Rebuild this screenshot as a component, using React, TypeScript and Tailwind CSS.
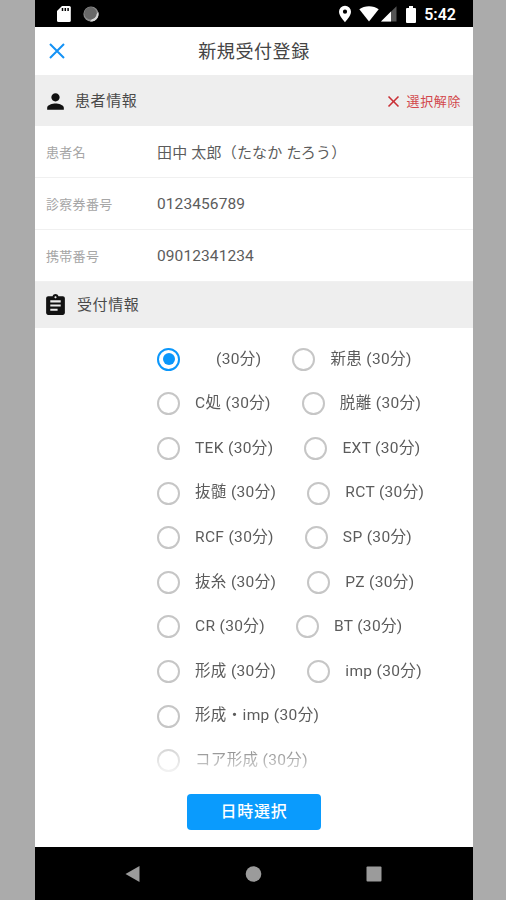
import React, { useState } from 'react';
import { clsx } from 'clsx';
import { MdPerson, MdAssignment, MdClose } from 'react-icons/md';

type Option = { id: string; label: string };

const patient = [
  { label: '患者名', value: '田中 太郎（たなか たろう）', className: 'text-[15px] tracking-[0.2px] pt-px' },
  { label: '診察券番号', value: '0123456789', className: 'text-[15.500px] tracking-[0.100px]' },
  { label: '携帯番号', value: '09012341234', className: 'text-[15.500px] tracking-[0.100px]' }
];

const optionRows: Option[][] = [
  [{ id: 'none', label: '' }, { id: 'new', label: '新患' }],
  [{ id: 'c', label: 'C処' }, { id: 'datsuri', label: '脱離' }],
  [{ id: 'tek', label: 'TEK' }, { id: 'ext', label: 'EXT' }],
  [{ id: 'batsuzui', label: '抜髄' }, { id: 'rct', label: 'RCT' }],
  [{ id: 'rcf', label: 'RCF' }, { id: 'sp', label: 'SP' }],
  [{ id: 'basshi', label: '抜糸' }, { id: 'pz', label: 'PZ' }],
  [{ id: 'cr', label: 'CR' }, { id: 'bt', label: 'BT' }],
  [{ id: 'keisei', label: '形成' }, { id: 'imp', label: 'imp' }],
  [{ id: 'keisei-imp', label: '形成・imp' }],
  [{ id: 'core', label: 'コア形成' }]
];

const StatusBar = () => (
  <div className="h-[27px] shrink-0 bg-black flex items-center pl-[21px] pr-[17px] text-white">
    <svg width="16" height="18" viewBox="0 0 16 18" className="mt-px">
      <path d="M6 1h7.300a1.500 1.500 0 0 1 1.500 1.500v13a1.500 1.500 0 0 1-1.500 1.500H2.500A1.500 1.500 0 0 1 1 15.500V6z" fill="#fff" />
      <path d="M6.500 3v3M9.300 3v3M12.100 3v3" stroke="#000" strokeWidth="1.500" />
    </svg>
    <svg width="18" height="18" viewBox="0 0 18 18" className="ml-[10px] mt-px">
      <circle cx="9" cy="9" r="7.600" fill="#8c8c8c" />
      <path d="M16.300 7A7.600 7.600 0 0 1 8 16.500L10 14z" fill="#d8d8d8" />
      <circle cx="8.500" cy="8.300" r="6.200" fill="#686868" />
    </svg>
    <div className="flex-1" />
    <svg width="14" height="18" viewBox="0 0 14 18" className="mt-px">
      <path d="M7 .8a6 6 0 0 0-6 6C1 11 7 17.200 7 17.200S13 11 13 6.800a6 6 0 0 0-6-6zm0 8a2.100 2.100 0 1 1 0-4.200 2.100 2.100 0 0 1 0 4.200z" fill="#fff" />
    </svg>
    <svg width="20" height="16" viewBox="0 0 20 16" className="ml-[7px] mt-px">
      <path d="M10 15.500.3 3.200C3 1.200 6.300.2 10 .2s7 1 9.700 3z" fill="#fff" />
    </svg>
    <svg width="16" height="16" viewBox="0 0 16 16" className="ml-[2px] mt-px">
      <path d="M0 15.500 15.500.2v15.300z" fill="#555" />
      <path d="M0 15.500 10 5.600v9.900z" fill="#fff" />
    </svg>
    <svg width="10" height="17" viewBox="0 0 10 17" className="ml-[9px] mt-px">
      <path d="M3 0h4v2h2a1 1 0 0 1 1 1v13a1 1 0 0 1-1 1H1a1 1 0 0 1-1-1V3a1 1 0 0 1 1-1h2z" fill="#fff" />
    </svg>
    <span className="ml-[8px] mt-[2px] text-[16px] leading-none font-semibold">5:42</span>
  </div>
);

const Radio = ({ option, checked, onSelect }: { option: Option; checked: boolean; onSelect: () => void }) => (
  <button type="button" role="radio" aria-checked={checked} onClick={onSelect} className="flex items-center gap-[15px]">
    <span
      className={clsx(
        'size-[23px] rounded-full border-2 flex items-center justify-center',
        checked ? 'border-[#0b97fb]' : 'border-[#c6c6c6]'
      )}
    >
      {checked && <span className="size-[12px] rounded-full bg-[#0b97fb]" />}
    </span>
    <span className={clsx('whitespace-nowrap', !option.label && 'pl-[21px]')}>
      {option.label ? `${option.label} (30分)` : '(30分)'}
    </span>
  </button>
);

export default function App() {
  const [selected, setSelected] = useState('none');

  return (
    <div className="h-[900px] w-[506px] bg-[#ababab] pl-[35px] pr-[33px] font-['Roboto','Noto_Sans_CJK_JP',sans-serif] overflow-hidden">
      <div className="h-full flex flex-col bg-white text-[#5c5c5c]">
        <StatusBar />

        {/* Title */}
        <header className="h-[48px] shrink-0 grid grid-cols-[60px_1fr_60px] items-center">
          <button type="button" aria-label="閉じる" className="pl-[14px]">
            <svg width="16" height="16" viewBox="0 0 16 16" stroke="#1492f5" strokeWidth="2">
              <path d="M1 1l14 14M15 1L1 15" />
            </svg>
          </button>
          <h1 className="mt-[2px] text-center text-[18px] tracking-[0.6px] text-[#444] leading-none">新規受付登録</h1>
        </header>

        {/* Patient */}
        <div className="h-[51px] shrink-0 bg-[#eee] flex items-center pt-px pl-[8px] pr-[12px]">
          <MdPerson size={25} className="text-[#111]" />
          <h2 className="ml-[7px] text-[15px] tracking-[0.6px] text-[#4a4a4a]">患者情報</h2>
          <button type="button" className="ml-auto flex items-center gap-[4px] text-[#d2484c]">
            <MdClose size={19} className="text-[#c92f35]" />
            <span className="pt-px text-[13px] tracking-[0.6px]">選択解除</span>
          </button>
        </div>
        {patient.map((row) => (
          <div key={row.label} className="h-[52px] shrink-0 flex items-center pt-[2px] pl-[11px] border-b border-[#f0f0f0]">
            <span className="w-[111px] text-[13px] tracking-[0.3px] text-[#a6a6a6]">{row.label}</span>
            <span className={row.className}>{row.value}</span>
          </div>
        ))}

        {/* Reception */}
        <div className="h-[46px] shrink-0 bg-[#eee] flex items-center pl-[8px]">
          <MdAssignment size={25} className="text-[#111]" />
          <h2 className="ml-[9px] text-[15px] tracking-[0.6px] text-[#4a4a4a]">受付情報</h2>
        </div>
        <div
          role="radiogroup"
          className="h-[466px] shrink-0 overflow-hidden pt-[9px] pl-[122px] text-[15.500px] tracking-[0.35px] mask-[linear-gradient(to_bottom,#000_408px,transparent_454px)]"
        >
          {optionRows.map((row) => (
            <div key={row[0].id} className="h-[44.600px] flex items-center gap-[31px]">
              {row.map((option) => (
                <Radio
                  key={option.id}
                  option={option}
                  checked={selected === option.id}
                  onSelect={() => setSelected(option.id)}
                />
              ))}
            </div>
          ))}
        </div>

        <div className="h-[53px] shrink-0 flex justify-center items-start">
          <button type="button" className="w-[134px] h-[36px] rounded-[4px] bg-[#0a9bfd] text-white text-[16px] font-medium tracking-[0.8px] leading-none">
            日時選択
          </button>
        </div>

        {/* Navigation bar */}
        <nav className="flex-1 bg-black">
          <svg width="438" height="53" viewBox="0 0 438 53" fill="#9b9b9b">
            <path d="M90.500 27 104.500 19v16z" />
            <circle cx="218.500" cy="27" r="7.800" />
            <rect x="331.500" y="19.500" width="15" height="15" rx="1" />
          </svg>
        </nav>
      </div>
    </div>
  );
}
